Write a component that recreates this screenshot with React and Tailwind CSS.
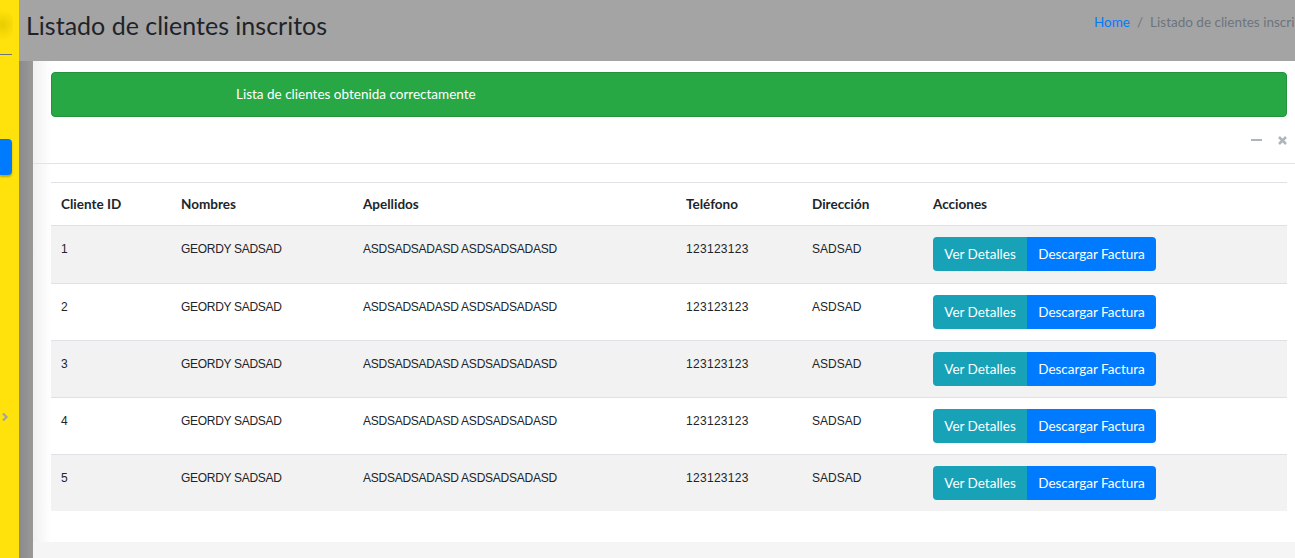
export default function App() {
  const rows = [
    { id: 1, dir: "SADSAD" },
    { id: 2, dir: "ASDSAD" },
    { id: 3, dir: "ASDSAD" },
    { id: 4, dir: "SADSAD" },
    { id: 5, dir: "SADSAD" },
  ];
  const cols = "grid grid-cols-[120px_182px_323px_126px_121px_1fr]";
  return (
    <div className="w-[1295px] h-[558px] overflow-hidden flex bg-[#a4a4a4] font-['Lato',sans-serif]">
      {/* Sidebar */}
      <aside className="w-[19px] shrink-0 bg-[#ffe20b] flex flex-col">
        <div className="mt-[8px] h-[34px] w-[13px] rounded-r-full bg-[radial-gradient(circle_at_20%_50%,#e9cc00,#ffe20b_75%)]" />
        <div className="mt-[12px] h-px w-[12px] bg-[#6c757d]" />
        <div className="mt-[84px] h-[36px] w-[12px] rounded-r-[4px] bg-[#007bff] shadow-[0_2px_2px_rgba(0,0,0,0.25)]" />
        <div className="mt-[237px] pl-[1px]">
          <svg width="8" height="10" viewBox="0 0 8 10">
            <path d="M2 1.5 L5.5 5 L2 8.5" fill="none" stroke="#a3a3a3" strokeWidth="2.2" />
          </svg>
        </div>
      </aside>

      {/* Main */}
      <main className="flex-1 min-w-0 flex flex-col">
        <header className="h-[61px] shrink-0 flex items-start pl-[7px]">
          <h1 className="w-[1068px] shrink-0 mt-[8px] text-[25px] leading-[34px] text-[#1f2328] font-normal">
            Listado de clientes inscritos
          </h1>
          <nav className="shrink-0 mt-[12px] whitespace-nowrap text-[13.5px] leading-[20px] flex gap-[7px]">
            <span className="text-[#007bff]">Home</span>
            <span className="text-[#6c757d]">/</span>
            <span className="text-[#6c757d]">Listado de clientes inscritos</span>
          </nav>
        </header>

        <div className="flex-1 flex min-h-0">
          <div className="w-[14px] shrink-0 bg-[linear-gradient(to_right,#8b8b8b,#999999)]" />
          <section className="w-[1272px] shrink-0 bg-[linear-gradient(to_right,#f1f1f1,#ffffff_18px)] flex flex-col">
            <div className="pt-[11px] px-[18px]">
              <div className="h-[45px] rounded-[4px] border border-[#23923d] bg-[#28a745] flex items-center pl-[184px] text-white text-[13.5px]">
                Lista de clientes obtenida correctamente
              </div>
            </div>
            <div className="h-[47px] shrink-0 border-b border-[#e3e3e3] flex items-center justify-end gap-[16px] pr-[18px]">
              <svg width="11" height="4" viewBox="0 0 11 4">
                <rect x="0" y="1" width="11" height="2" fill="#adb5bd" />
              </svg>
              <svg width="9" height="9" viewBox="0 0 9 9">
                <path d="M1 1 L8 8 M8 1 L1 8" stroke="#adb5bd" strokeWidth="2.6" />
              </svg>
            </div>
            <div className="pt-[18px] px-[18px]">
              <div className="border-t border-[#dee2e6] text-[#212529]">
                <div className={`${cols} h-[43px] items-center pt-[1px] border-b border-[#dee2e6] text-[13.5px] font-bold`}>
                  <div className="pl-[10px]">Cliente ID</div>
                  <div className="pl-[10px]">Nombres</div>
                  <div className="pl-[10px]">Apellidos</div>
                  <div className="pl-[10px]">Teléfono</div>
                  <div className="pl-[10px]">Dirección</div>
                  <div className="pl-[10px]">Acciones</div>
                </div>
                {rows.map((r, i) => (
                  <div
                    key={r.id}
                    className={`${cols} h-[57px] ${i > 0 ? "border-t border-[#dee2e6]" : ""} ${
                      i % 2 === 0 ? "bg-[#f2f2f2]" : "bg-white"
                    } font-['Liberation_Sans',Arial,sans-serif] text-[12px] leading-[20px]`}
                  >
                    <div className="pl-[10px] pt-[13px]">{r.id}</div>
                    <div className="pl-[10px] pt-[13px] tracking-[-0.3px]">GEORDY SADSAD</div>
                    <div className="pl-[10px] pt-[13px] tracking-[-0.25px]">ASDSADSADASD ASDSADSADASD</div>
                    <div className="pl-[10px] pt-[13px] tracking-[0.3px]">123123123</div>
                    <div className="pl-[10px] pt-[13px]">{r.dir}</div>
                    <div className="pl-[10px] pt-[11px] flex items-start font-['Lato',sans-serif] text-[13.5px]">
                      <button className="h-[34px] w-[94px] rounded-l-[4px] bg-[#17a2b8] text-white">
                        Ver Detalles
                      </button>
                      <button className="h-[34px] w-[129px] rounded-r-[4px] bg-[#007bff] text-white">
                        Descargar Factura
                      </button>
                    </div>
                  </div>
                ))}
              </div>
            </div>
            <div className="h-[31px] shrink-0" />
            <div className="flex-1 bg-[#f5f5f5]" />
          </section>
        </div>
      </main>
    </div>
  );
}
